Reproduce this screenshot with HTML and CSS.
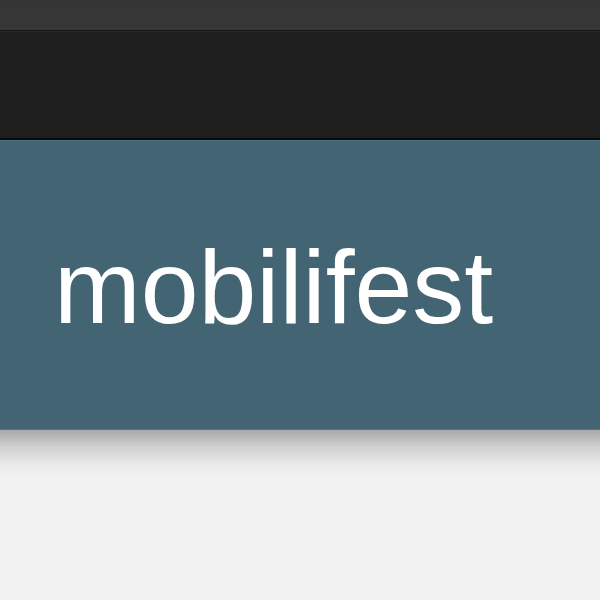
FILE: index.html
```html
<!DOCTYPE html>
<html lang="en">
<head>
    <meta charset="UTF-8">
    <meta name="viewport" content="width=device-width, initial-scale=1.0">
    <title>mobilifest</title>
    <link rel="stylesheet" href="styles.css">
</head>
<body>
    <!-- Top toolbar -->
    <div class="topbar"></div>

    <!-- Dark nav strip -->
    <div class="navbar"></div>

    <!-- Brand banner -->
    <header class="banner">
        <h1 class="brand">mobilifest</h1>
    </header>

    <main class="content"></main>
</body>
</html>
```

FILE: styles.css
```css
body {
    margin: 0;
    padding: 0;
    background: #f2f2f2;
    font-family: 'Liberation Sans', Arial, sans-serif;
}
.topbar {
    height: 30px;
    background: linear-gradient(to bottom, #353535, #373737);
    border-bottom: 1px solid #151515;
}
.navbar {
    height: 106px;
    background: #1e1e1e;
    border-top: 1px solid #2a2a2a;
    border-bottom: 2px solid #0a0a0a;
}
.banner {
    height: 290px;
    background: #426473;
    border-top: 1px solid #4d707f;
    border-bottom: 1px solid #56757f;
    display: flex;
    align-items: center;
    padding: 4px 54px 0;
    box-sizing: border-box;
}
.brand {
    margin: 0;
    font-size: 104px;
    font-weight: 400;
    color: #fff;
    line-height: 1;
}
.content {
    height: 170px;
    background: linear-gradient(to bottom, #a9a9a9 0px, #d2d2d2 18px, #ebebeb 36px, #f2f2f2 50px);
}
```
